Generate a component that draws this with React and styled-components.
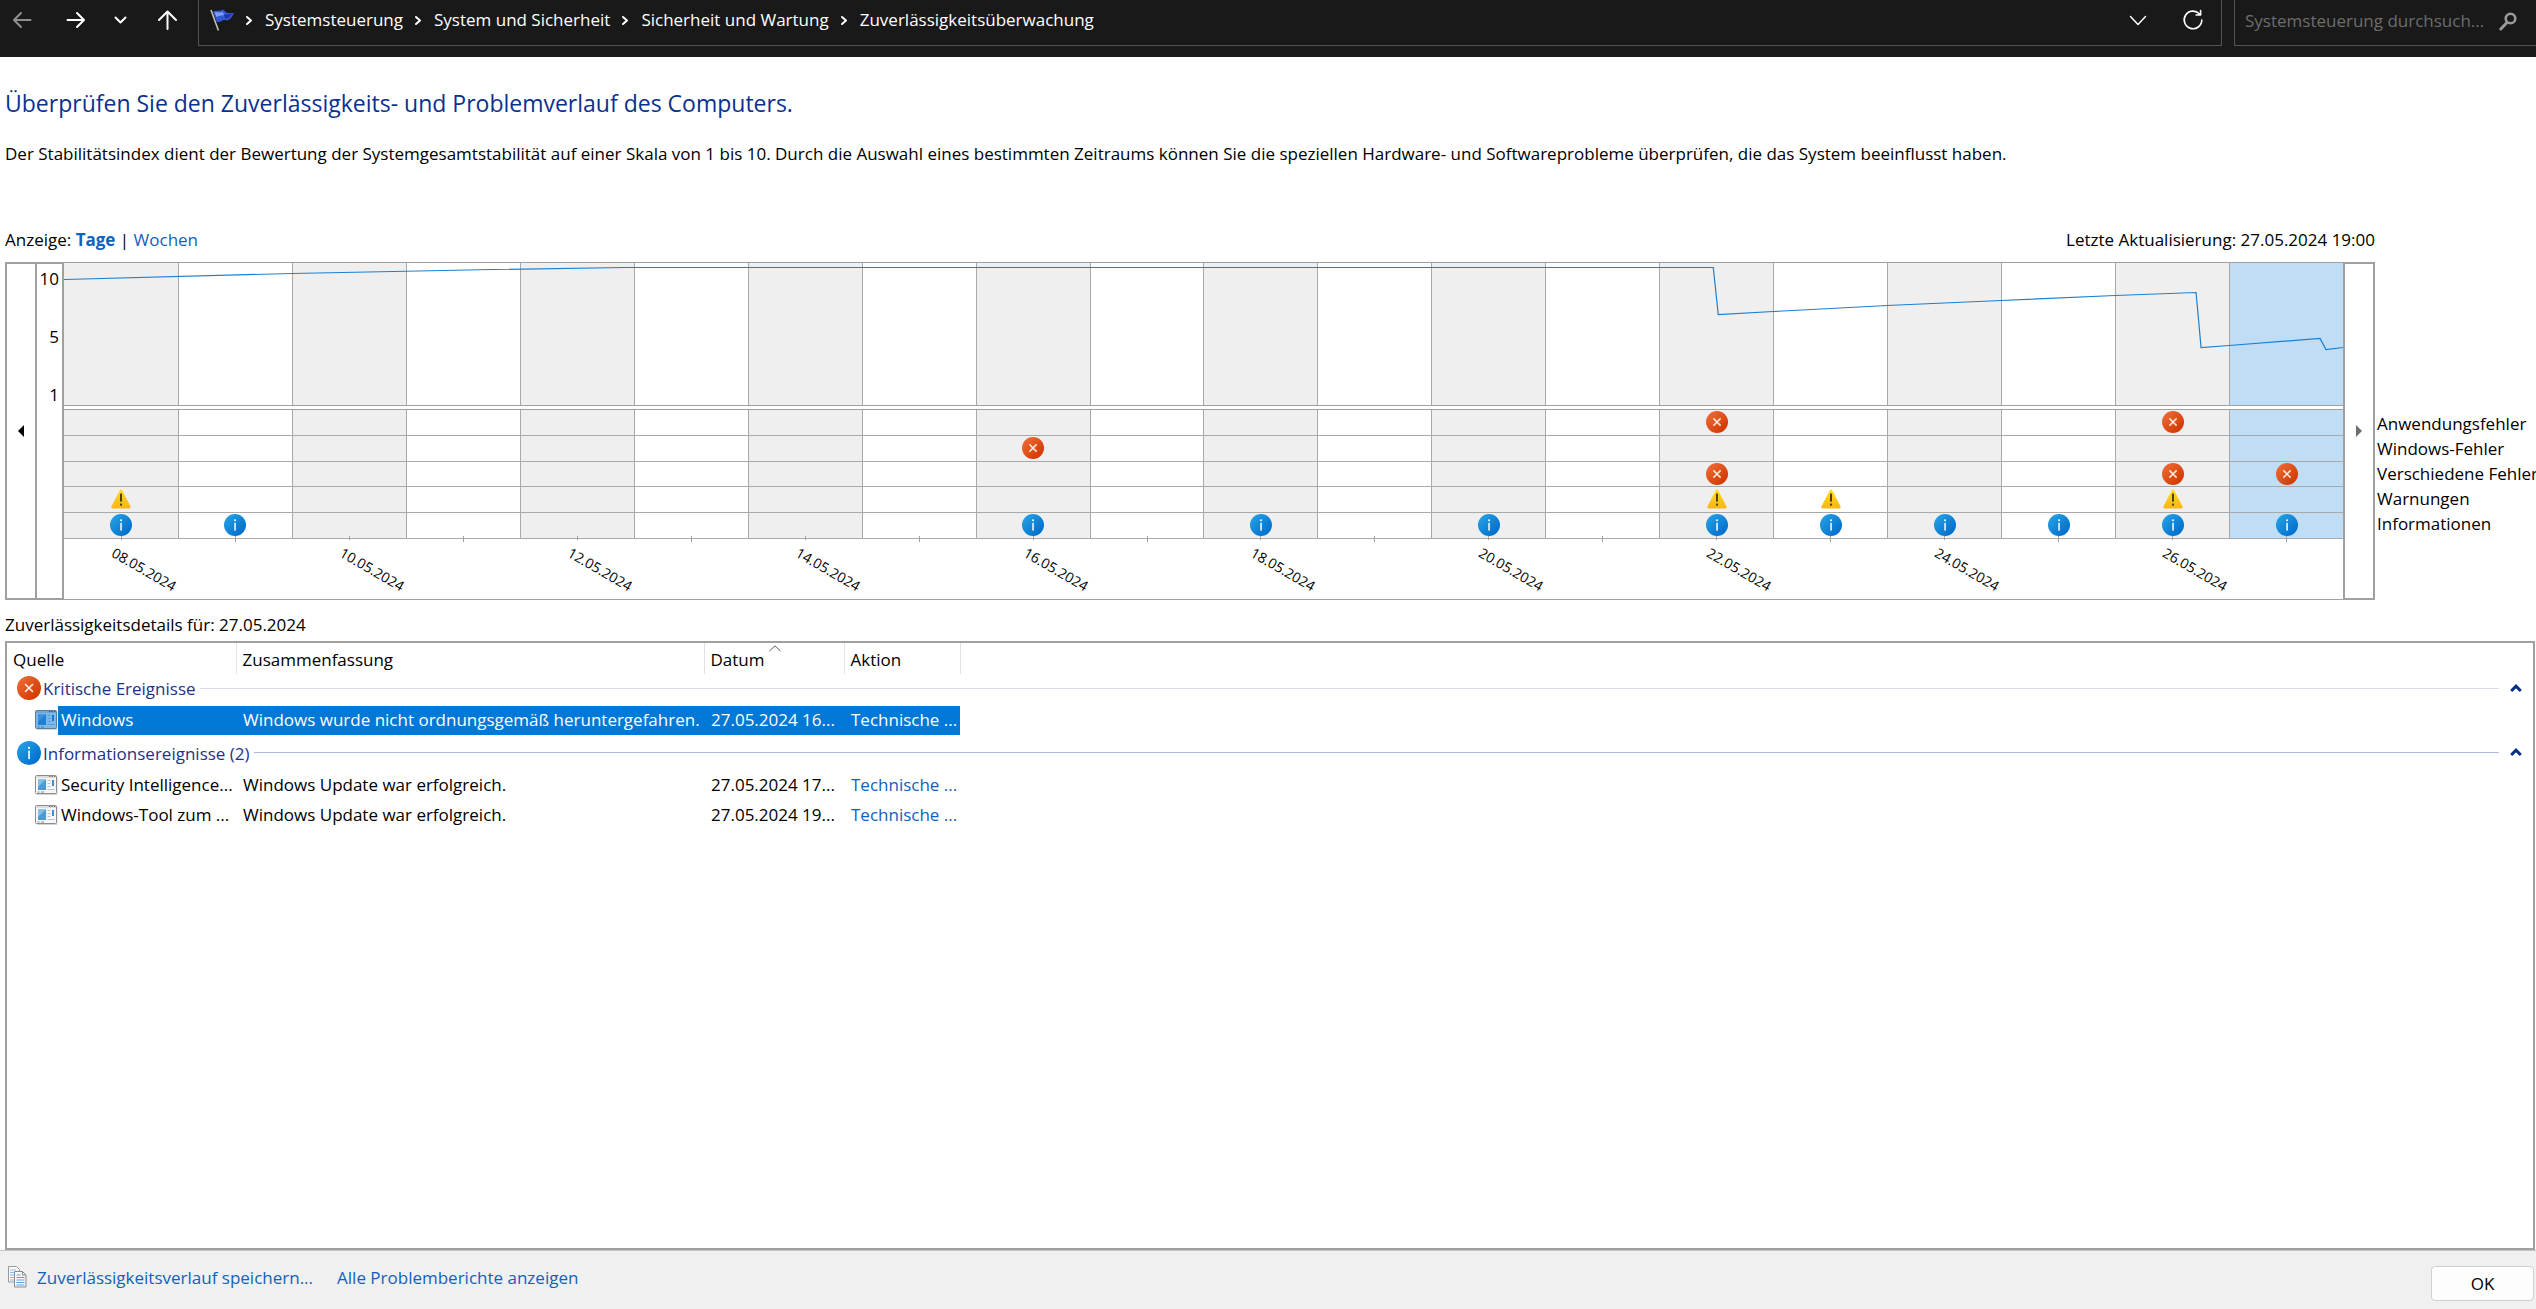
import React from 'react'
import styled, { createGlobalStyle, css } from 'styled-components'

const DAYS = [
    { date: '08.05.2024', warning: true, info: true },
    { date: '09.05.2024', info: true },
    { date: '10.05.2024' },
    { date: '11.05.2024' },
    { date: '12.05.2024' },
    { date: '13.05.2024' },
    { date: '14.05.2024' },
    { date: '15.05.2024' },
    { date: '16.05.2024', windows: true, info: true },
    { date: '17.05.2024' },
    { date: '18.05.2024', info: true },
    { date: '19.05.2024' },
    { date: '20.05.2024', info: true },
    { date: '21.05.2024' },
    { date: '22.05.2024', app: true, misc: true, warning: true, info: true },
    { date: '23.05.2024', warning: true, info: true },
    { date: '24.05.2024', info: true },
    { date: '25.05.2024', info: true },
    { date: '26.05.2024', app: true, misc: true, warning: true, info: true },
    { date: '27.05.2024', misc: true, info: true, selected: true },
]

const EVENT_ROWS = [
    { key: 'app', label: 'Anwendungsfehler', icon: ErrorIcon },
    { key: 'windows', label: 'Windows-Fehler', icon: ErrorIcon },
    { key: 'misc', label: 'Verschiedene Fehler', icon: ErrorIcon },
    { key: 'warning', label: 'Warnungen', icon: WarningIcon },
    { key: 'info', label: 'Informationen', icon: InfoIcon },
]

const CRUMBS = ['Systemsteuerung', 'System und Sicherheit', 'Sicherheit und Wartung', 'Zuverlässigkeitsüberwachung']

const GROUPS = [
    {
        title: 'Kritische Ereignisse',
        icon: ErrorIcon,
        line: '#d9dde6',
        rows: [
            {
                source: 'Windows',
                summary: 'Windows wurde nicht ordnungsgemäß heruntergefahren.',
                date: '27.05.2024 16...',
                action: 'Technische ...',
                selected: true,
            },
        ],
    },
    {
        title: 'Informationsereignisse (2)',
        icon: InfoIcon,
        line: '#b0bada',
        rows: [
            {
                source: 'Security Intelligence...',
                summary: 'Windows Update war erfolgreich.',
                date: '27.05.2024 17...',
                action: 'Technische ...',
            },
            {
                source: 'Windows-Tool zum ...',
                summary: 'Windows Update war erfolgreich.',
                date: '27.05.2024 19...',
                action: 'Technische ...',
            },
        ],
    },
]

const LINE = '0,16.5 228,10.5 430,6.5 560,4.5 1650,4.5 1655,51.5 1710,48.5 1824,42.5 1938,37.5 2052,32.5 2133,29.5 2138,84.5 2166,82.5 2257,75.5 2263,86.5 2280,84.5'

function ErrorIcon({ size = 22 }) {
    return (
        <svg width={size} height={size} viewBox="0 0 22 22" aria-hidden="true">
            <defs>
                <linearGradient id="err" x1="0" y1="0" x2="1" y2="1">
                    <stop offset="0.1" stopColor="#ee6a33" />
                    <stop offset="0.9" stopColor="#d03600" />
                </linearGradient>
            </defs>
            <circle cx="11" cy="11" r="11" fill="url(#err)" />
            <path d="M7.4 7.4l7.2 7.2M14.6 7.4l-7.2 7.2" stroke="#fbe6dd" strokeWidth="1.5" />
        </svg>
    )
}

function InfoIcon({ size = 22 }) {
    return (
        <svg width={size} height={size} viewBox="0 0 22 22" aria-hidden="true">
            <defs>
                <linearGradient id="inf" x1="0" y1="0" x2="1" y2="1">
                    <stop offset="0.1" stopColor="#25a0e4" />
                    <stop offset="0.9" stopColor="#006ccb" />
                </linearGradient>
            </defs>
            <circle cx="11" cy="11" r="11" fill="url(#inf)" />
            <rect x="10.2" y="5.4" width="1.7" height="1.8" fill="#fff" />
            <rect x="10.3" y="8.8" width="1.5" height="7.8" fill="#fff" />
        </svg>
    )
}

function WarningIcon() {
    return (
        <svg width="22" height="22" viewBox="0 0 22 22" aria-hidden="true">
            <defs>
                <linearGradient id="wrn" x1="0" y1="0" x2="0" y2="1">
                    <stop offset="0" stopColor="#ffdb1c" />
                    <stop offset="1" stopColor="#f9b616" />
                </linearGradient>
            </defs>
            <path
                d="M10 2Q11 0.4 12 2L20.6 18.6Q21.2 20.4 19.6 20.4H2.4Q0.8 20.4 1.4 18.6Z"
                fill="url(#wrn)"
            />
            <rect x="10.1" y="5.6" width="1.8" height="8" fill="#3b3310" />
            <rect x="10.1" y="15.6" width="1.8" height="2" fill="#3b3310" />
        </svg>
    )
}

const ProgramIcon = ({ selected }) => (
    <svg width="23" height="20" viewBox="0 0 23 20" aria-hidden="true">
        <rect x="1.5" y="1.5" width="21" height="18.5" rx="1" fill="#d4d4d4" />
        <rect x="0.5" y="0.5" width="21" height="18" rx="1" fill={selected ? '#7db8ea' : '#f7f7f7'} stroke={selected ? '#5d7c98' : '#8d8d8d'} />
        <rect x="1" y="1" width="20" height="2" fill={selected ? '#6ea6d6' : '#dcdcdc'} />
        <path d="M14 1.5h1.5M16.5 1.5H18M19 1.5h1.5" stroke={selected ? '#2f5f8d' : '#777'} />
        <rect x="3" y="4.5" width="8" height="10.5" fill={selected ? '#1f7fd0' : '#4a9ad4'} />
        <path d="M3 4.5h8L3 12z" fill={selected ? '#3a92dd' : '#7fbfe8'} />
        <path d="M12.5 5.5h3M12.5 8.5h3M12.5 11.5h3M12.5 14.5h7" stroke={selected ? '#5a9bd4' : '#b9c3cc'} />
        <rect x="17" y="5" width="2" height="6" fill={selected ? '#1c78c8' : '#3d8fd0'} />
        <path d="M2.5 17h2M6 17h3" stroke={selected ? '#4780b5' : '#8a8a8a'} />
    </svg>
)

const FlagIcon = () => (
    <svg width="25" height="23" viewBox="0 0 25 23" aria-hidden="true">
        <path d="M1 1l7.4 20.6" stroke="#c4bfae" strokeWidth="1.6" />
        <path d="M3 2.6C6 .4 9 3.2 13 .4l3.4 3c2.6 1.2 5 .2 7.4.6-1 3-3.2 6.4-6.2 7.6-2.4-.8-5-.6-6.6.6C9.6 13 8 13 6.8 13z" fill="#3358d6" />
        <path d="M4.6 3.6c3-1 5 .8 7.8-.8l2 3.6c-2.8-.4-5 .6-8 1.6z" fill="#7f9df4" />
        <path d="M14 6l8-1.2-3.6 4.2-3 .4z" fill="#1c34ac" />
    </svg>
)

const CopyIcon = () => (
    <svg width="19" height="22" viewBox="0 0 19 22" aria-hidden="true">
        <path d="M.5.5h8l3 3V16H.5z" fill="#fafafa" stroke="#9a9a9a" />
        <path d="M2 4h6M2 6.5h7M2 9h7M2 11.5h7M2 14h7" stroke="#8fbbe8" />
        <path d="M6.5 5.5h8L18 9v12H6.5z" fill="#fafafa" stroke="#8a8a8a" />
        <path d="M14.5 5.5V9H18" fill="none" stroke="#8a8a8a" />
        <path d="M8.5 9h4M8.5 11.5h8M8.5 14h8M8.5 16.5h8M8.5 19h8" stroke="#5d9be0" />
    </svg>
)

const Stroke = ({ w, h, d, width = 2, fill = 'none' }) => (
    <svg width={w} height={h} viewBox={`0 0 ${w} ${h}`} aria-hidden="true">
        <path d={d} fill={fill} stroke="currentColor" strokeWidth={width} strokeLinecap="round" strokeLinejoin="round" />
    </svg>
)

const CrumbArrow = () => <Stroke w={8} h={11} d="M2 2l4 3.5L2 9" />

const TopBar = () => (
    <Bar>
        <Nav>
            <NavButton aria-label="Zurück" disabled>
                <Stroke w={20} h={20} d="M18.5 10H2M9 3L2 10l7 7" />
            </NavButton>
            <NavButton aria-label="Vorwärts">
                <Stroke w={20} h={20} d="M1.5 10H18M11 3l7 7-7 7" />
            </NavButton>
            <NavButton aria-label="Zuletzt besuchte Seiten">
                <Stroke w={20} h={20} d="M3.5 7.5l5 5 5-5" />
            </NavButton>
            <NavButton aria-label="Nach oben">
                <Stroke w={20} h={20} d="M9.5 19V1.5M1 10l8.5-8.5L18 10" />
            </NavButton>
        </Nav>
        <Address>
            <FlagIcon />
            <Crumbs>
                {CRUMBS.map((crumb) => (
                    <Crumb key={crumb}>
                        <CrumbArrow />
                        <a href="#">{crumb}</a>
                    </Crumb>
                ))}
            </Crumbs>
            <NavButton aria-label="Vorherige Orte">
                <Stroke w={20} h={20} width={1.5} d="M2.5 6.5l7.5 8 7.5-8" />
            </NavButton>
            <NavButton aria-label="Aktualisieren">
                <Stroke w={22} h={22} width={1.6} d="M17.5 5A8.8 8.8 0 1 0 19.8 11M18.6 1.5V6h-4.5" />
            </NavButton>
        </Address>
        <Search>
            <SearchInput type="text" aria-label="Suchen" placeholder="Systemsteuerung durchsuch..." />
            <SearchButton aria-label="Suchen">
                <svg width="18" height="19" viewBox="0 0 18 19" aria-hidden="true">
                    <circle cx="11.5" cy="6.5" r="4.8" fill="none" stroke="currentColor" strokeWidth="2.6" />
                    <path d="M8 10.5L1.8 17" stroke="currentColor" strokeWidth="3" strokeLinecap="round" />
                </svg>
            </SearchButton>
        </Search>
    </Bar>
)

const Chart = () => (
    <ChartRow>
        <Frame>
            <ScrollButton aria-label="Frühere Tage">
                <svg width="6" height="12" viewBox="0 0 6 12" aria-hidden="true">
                    <path d="M6 0v12L0 6z" fill="#000" />
                </svg>
            </ScrollButton>
            <Axis>
                <span>10</span>
                <span>5</span>
                <span>1</span>
            </Axis>
            <Plot>
                <Stability>
                    {DAYS.map((day) => (
                        <Day key={day.date} $selected={day.selected} />
                    ))}
                    <Curve viewBox="0 0 2280 142" preserveAspectRatio="none" aria-hidden="true">
                        <polyline points={LINE} fill="none" stroke="#1b7fd0" strokeWidth="1.2" vectorEffect="non-scaling-stroke" />
                    </Curve>
                </Stability>
                <Events>
                    {DAYS.map((day) => (
                        <Day key={day.date} $selected={day.selected}>
                            {EVENT_ROWS.map(({ key, icon: Icon }) => (
                                <EventCell key={key}>{day[key] && <Icon />}</EventCell>
                            ))}
                        </Day>
                    ))}
                </Events>
                <Dates>
                    {DAYS.map((day, i) => (
                        <DateCell key={day.date} $long={i % 2 === 1}>
                            {i % 2 === 0 && <DateLabel>{day.date}</DateLabel>}
                        </DateCell>
                    ))}
                </Dates>
            </Plot>
            <ScrollButton aria-label="Spätere Tage">
                <svg width="6" height="12" viewBox="0 0 6 12" aria-hidden="true">
                    <path d="M0 0v12l6-6z" fill="#6d6d6d" />
                </svg>
            </ScrollButton>
        </Frame>
        <Legend>
            {EVENT_ROWS.map((row) => (
                <li key={row.key}>{row.label}</li>
            ))}
        </Legend>
    </ChartRow>
)

const Details = () => (
    <ListBox>
        <Table>
            <colgroup>
                <col width="229" />
                <col width="468" />
                <col width="140" />
                <col width="116" />
                <col />
            </colgroup>
            <thead>
                <tr>
                    <Th>Quelle</Th>
                    <Th>Zusammenfassung</Th>
                    <Th aria-sort="ascending">
                        Datum
                        <SortMark width="12" height="7" viewBox="0 0 12 7" aria-hidden="true">
                            <path d="M.5 6L6 .8 11.5 6" fill="none" stroke="#5c5c5c" />
                        </SortMark>
                    </Th>
                    <Th>Aktion</Th>
                    <td />
                </tr>
            </thead>
            {GROUPS.map(({ title, icon: Icon, line, rows }, i) => (
                <tbody key={title}>
                    <tr>
                        <td colSpan="5">
                            <Group $first={i === 0}>
                                <Icon size={24} />
                                <span>{title}</span>
                                <Rule $color={line} />
                                <Collapse aria-label={`${title} reduzieren`}>
                                    <svg width="12" height="9" viewBox="0 0 12 9" aria-hidden="true">
                                        <path d="M1.2 7L6 2.2 10.8 7" fill="none" stroke="#00308c" strokeWidth="3" />
                                    </svg>
                                </Collapse>
                            </Group>
                        </td>
                    </tr>
                    {rows.map((row) => (
                        <tr key={row.source}>
                            <Td>
                                <Source>
                                    <ProgramIcon selected={row.selected} />
                                    <Cell $tight $selected={row.selected}>{row.source}</Cell>
                                </Source>
                            </Td>
                            <Td><Cell $selected={row.selected}>{row.summary}</Cell></Td>
                            <Td><Cell $selected={row.selected}>{row.date}</Cell></Td>
                            <Td><Cell $selected={row.selected}><a href="#">{row.action}</a></Cell></Td>
                            <td />
                        </tr>
                    ))}
                </tbody>
            ))}
        </Table>
    </ListBox>
)

const App = () => (
    <Page>
        <GlobalStyle />
        <TopBar />
        <Main>
            <Title>Überprüfen Sie den Zuverlässigkeits- und Problemverlauf des Computers.</Title>
            <Intro>
                Der Stabilitätsindex dient der Bewertung der Systemgesamtstabilität auf einer Skala von 1 bis 10. Durch die Auswahl eines bestimmten Zeitraums können Sie die speziellen Hardware- und Softwareprobleme überprüfen, die das System beeinflusst haben.
            </Intro>
            <ViewRow>
                <span>
                    Anzeige: <a href="#"><b>Tage</b></a> | <a href="#">Wochen</a>
                </span>
                <span>Letzte Aktualisierung: 27.05.2024 19:00</span>
            </ViewRow>
            <Chart />
            <DetailsTitle>Zuverlässigkeitsdetails für: 27.05.2024</DetailsTitle>
            <Details />
        </Main>
        <Footer>
            <CopyIcon />
            <FooterLinks>
                <a href="#">Zuverlässigkeitsverlauf speichern...</a>
                <a href="#">Alle Problemberichte anzeigen</a>
            </FooterLinks>
            <OkButton>OK</OkButton>
        </Footer>
    </Page>
)

export default App

const GlobalStyle = createGlobalStyle`
    * {
        box-sizing: border-box;
    }

    body {
        margin: 0;
        background: #fff;
        color: #000;
        font: 17px/24px 'Open Sans', 'Noto Sans', sans-serif;
    }

    button, input {
        font: inherit;
    }

    a {
        color: #0f62bd;
        text-decoration: none;
    }

    svg {
        display: block;
        flex: none;
    }
`

const Page = styled.div`
    display: flex;
    flex-direction: column;
    min-height: 100vh;
`

const Bar = styled.header`
    display: flex;
    height: 57px;
    padding-bottom: 11px;
    background: #191919;
    color: #fff;
`

const Nav = styled.nav`
    display: flex;
    align-items: center;
    gap: 26px;
    width: 198px;
    padding: 0 0 6px 12px;

    & button:nth-of-type(2) {
        margin-left: 8px;
    }
`

const NavButton = styled.button`
    padding: 0;
    border: 0;
    background: none;
    color: inherit;

    &:disabled {
        color: #8f8f8f;
    }
`

const Address = styled.div`
    display: flex;
    flex: 1;
    align-items: center;
    gap: 34px;
    margin-right: 12px;
    padding: 0 17px 5px 11px;
    border: 1px solid #535353;
    border-top: 0;
`

const Crumbs = styled.div`
    display: flex;
    flex: 1;
    gap: 11px;
    margin-left: -24px;
`

const Crumb = styled.span`
    display: flex;
    align-items: center;
    gap: 12px;
    white-space: nowrap;

    & a {
        color: #fff;
    }
`

const Search = styled.div`
    display: flex;
    align-items: center;
    width: 302px;
    padding: 0 19px 3px 10px;
    border: solid #535353;
    border-width: 0 0 1px 1px;
`

const SearchInput = styled.input`
    flex: 1;
    min-width: 0;
    padding: 0;
    border: 0;
    outline: 0;
    background: none;
    color: #fff;

    &::placeholder {
        color: #6d6d6d;
    }
`

const SearchButton = styled(NavButton)`
    color: #9a9a9a;
`

const Main = styled.main`
    display: flex;
    flex: 1;
    flex-direction: column;
    padding-left: 5px;
`

const Title = styled.h1`
    margin: 0;
    padding-top: 30px;
    color: #0a3190;
    font-size: 23px;
    font-weight: 400;
    line-height: 32px;
`

const Intro = styled.p`
    margin: 23px 0 62px;
`

const ViewRow = styled.div`
    display: flex;
    justify-content: space-between;
    padding-right: 161px;
    margin-bottom: 10px;
`

const ChartRow = styled.section`
    display: flex;
`

const Frame = styled.div`
    display: grid;
    flex: 1;
    grid-template-columns: 32px 27px 1fr 32px;
    height: 338px;
`

const ScrollButton = styled.button`
    display: grid;
    place-items: center;
    padding: 0;
    border: 2px solid #a0a0a0;
    background: #fff;
`

const Axis = styled.div`
    display: flex;
    flex-direction: column;
    gap: 34px;
    padding: 3px 3px 0 0;
    border: solid #a0a0a0;
    border-width: 2px 2px 2px 0;
    text-align: right;
`

const Plot = styled.div`
    display: flex;
    flex-direction: column;
    border: solid #a0a0a0;
    border-width: 1px 0;
`

const dayGrid = css`
    display: grid;
    grid-template-columns: repeat(20, 1fr);
`

const Stability = styled.div`
    ${dayGrid}
    position: relative;
    height: 143px;
    margin-bottom: 3px;
    border-bottom: 1px solid #a0a0a0;
`

const Curve = styled.svg`
    position: absolute;
    inset: 0;
    width: 100%;
    height: 100%;
`

const Events = styled.div`
    ${dayGrid}
    height: 130px;
    border-top: 1px solid #a0a0a0;
`

const Day = styled.div`
    display: grid;
    grid-template-rows: repeat(5, 1fr);
    border-left: 1px solid #a9a9a9;
    background: ${({ $selected }) => ($selected ? '#bfddf5' : '#fff')};

    &:nth-of-type(2n + 1) {
        background: #efefef;
    }

    &:first-of-type {
        border-left: 0;
    }
`

const EventCell = styled.div`
    display: grid;
    place-items: start center;
    min-height: 0;
    padding-top: 1px;
    border-bottom: 1px solid #a9a9a9;
`

const Dates = styled.div`
    ${dayGrid}
    flex: 1;
`

const DateCell = styled.div`
    position: relative;

    &::before {
        content: '';
        position: absolute;
        top: -3px;
        left: 50%;
        width: 1px;
        height: ${({ $long }) => ($long ? 6 : 4)}px;
        background: #a0a0a0;
    }
`

const DateLabel = styled.span`
    position: absolute;
    top: 4px;
    left: 50%;
    margin-left: -3px;
    font-size: 14px;
    line-height: 20px;
    transform: rotate(30deg);
    transform-origin: 0 0;
`

const Legend = styled.ul`
    width: 161px;
    margin: 0;
    padding: 149px 0 0 2px;
    line-height: 25px;
    list-style: none;
    white-space: nowrap;
`

const DetailsTitle = styled.h2`
    margin: 0;
    padding: 13px 0 4px;
    font-size: 17px;
    font-weight: 400;
`

const ListBox = styled.div`
    flex: 1;
    margin-right: 1px;
    border: 2px solid #a0a0a0;
`

const Table = styled.table`
    width: 100%;
    border-collapse: collapse;
    table-layout: fixed;

    & td {
        padding: 0;
    }
`

const Th = styled.th`
    position: relative;
    height: 31px;
    padding: 2px 6px 0;
    border-right: 1px solid #e2e2e2;
    font-weight: 400;
    text-align: left;
`

const SortMark = styled.svg`
    position: absolute;
    top: 2px;
    left: 50%;
    margin-left: -5px;
`

const Td = styled.td`
    height: 30px;
`

const Group = styled.div`
    display: flex;
    align-items: center;
    height: ${({ $first }) => ($first ? 31 : 35)}px;
    padding: ${({ $first }) => ($first ? 0 : 3)}px 11px 3px 10px;
    color: #1e3287;

    & span {
        padding: 2px 4px 0 2px;
    }
`

const Rule = styled.div`
    flex: 1;
    height: 1px;
    background: ${({ $color }) => $color};
`

const Collapse = styled.button`
    margin-left: 11px;
    padding: 0;
    border: 0;
    background: none;
`

const Source = styled.div`
    display: flex;
    align-items: center;
    padding-left: 28px;
`

const Cell = styled.div`
    flex: 1;
    height: 29px;
    overflow: hidden;
    padding: 2px 0 0 ${({ $tight }) => ($tight ? 3 : 7)}px;
    background: ${({ $selected }) => ($selected ? '#0078d7' : 'none')};
    color: ${({ $selected }) => ($selected ? '#fff' : 'inherit')};
    white-space: nowrap;

    & a {
        ${({ $selected }) => $selected && 'color: #fff;'}
    }
`

const Footer = styled.footer`
    display: flex;
    height: 59px;
    align-items: flex-start;
    padding: 15px 2px 0 8px;
    border-top: 1px solid #c6c6c6;
    background: #f0f0f0;
`

const FooterLinks = styled.div`
    display: flex;
    flex: 1;
    gap: 24px;
    margin-left: 10px;
`

const OkButton = styled.button`
    width: 103px;
    height: 35px;
    border: 1px solid #d0d0d0;
    border-radius: 4px;
    background: #fdfdfd;
`
